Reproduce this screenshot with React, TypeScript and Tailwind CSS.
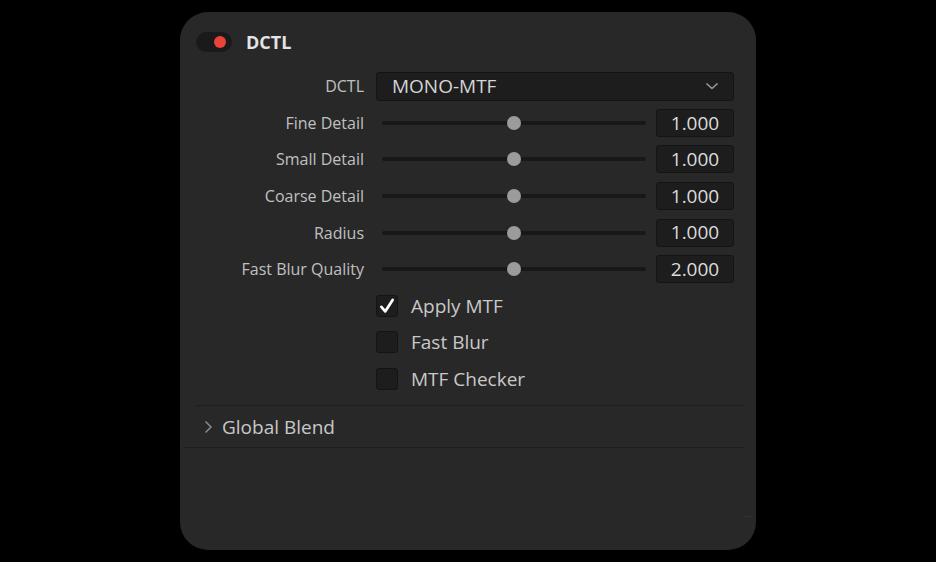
import { useState } from "react";

const sliders = [
  { label: "Fine Detail", value: "1.000" },
  { label: "Small Detail", value: "1.000" },
  { label: "Coarse Detail", value: "1.000" },
  { label: "Radius", value: "1.000" },
  { label: "Fast Blur Quality", value: "2.000" },
];

const checks = [
  { label: "Apply MTF", checked: true },
  { label: "Fast Blur", checked: false },
  { label: "MTF Checker", checked: false },
];

function Slider({ value }: { value: string }) {
  return (
    <div className="flex items-center h-full">
      <div className="relative ml-[6px] w-[264px] h-[4px] rounded-full bg-[#181818]">
        <div className="absolute left-[125px] top-[-5px] w-[14px] h-[14px] rounded-full bg-[#9b9b9b]" />
      </div>
      <div className="ml-[10px] w-[78px] h-[28px] flex items-center justify-center rounded-[3px] bg-[#1d1d1d] border border-[#141414] text-[19px] text-[#dcdcdc]">
        {value}
      </div>
    </div>
  );
}

export default function App() {
  const [checked, setChecked] = useState(checks.map((c) => c.checked));

  return (
    <div className="w-[936px] h-[562px] bg-black pt-[12px] font-['Open_Sans',sans-serif]">
      <div className="relative mx-auto w-[576px] h-[538px] rounded-[28px] bg-[#282828] pt-[20px]">
        {/* Header */}
        <div className="flex items-center h-[20px] pl-[16px]">
          <div className="w-[36px] h-[20px] rounded-full bg-[#1a1a1a] flex items-center justify-end pr-[6px]">
            <div className="w-[12px] h-[12px] rounded-full bg-[#e8443a]" />
          </div>
          <span className="ml-[14px] text-[18px] font-bold text-[#e4e4e4]">DCTL</span>
        </div>

        {/* Params */}
        <div className="mt-[16px] grid grid-cols-[184px_358px] gap-x-[12px] auto-rows-[36.6px] text-[#c0c0c0]">
          <div className="flex items-center justify-end text-[16px]">DCTL</div>
          <div className="flex items-center">
            <div className="w-full h-[29px] flex items-center justify-between pl-[15px] pr-[14px] rounded-[3px] bg-[#1d1d1d] border border-[#141414] text-[19px] text-[#d4d4d4]">
              <span>MONO-MTF</span>
              <svg width="14" height="8" viewBox="0 0 14 8" fill="none">
                <path d="M1.5 1.5 L7 6.5 L12.5 1.5" stroke="#9a9a9a" strokeWidth="1.6" />
              </svg>
            </div>
          </div>

          {sliders.map((s) => (
            <>
              <div key={s.label} className="flex items-center justify-end text-[16px]">
                {s.label}
              </div>
              <Slider key={s.label + "-s"} value={s.value} />
            </>
          ))}

          {checks.map((c, i) => (
            <>
              <div key={c.label + "-e"} />
              <label key={c.label} className="flex items-center cursor-pointer">
                <span
                  onClick={() => setChecked((prev) => prev.map((v, j) => (j === i ? !v : v)))}
                  className="w-[22px] h-[22px] rounded-[3px] bg-[#1d1d1d] border border-[#141414] flex items-center justify-center"
                >
                  {checked[i] && (
                    <svg width="18" height="18" viewBox="0 0 16 16" fill="none">
                      <path d="M3 8.8 L6.4 12.8 L13 2.6" stroke="#ffffff" strokeWidth="2.4" strokeLinecap="round" strokeLinejoin="round" />
                    </svg>
                  )}
                </span>
                <span className="ml-[13px] text-[19px] text-[#c8c8c8]">{c.label}</span>
              </label>
            </>
          ))}
        </div>

        {/* Global Blend */}
        <div className="mt-[8px] ml-[16px] mr-[12px] h-px bg-[#1f1f1f]" />
        <div className="flex items-center h-[41px] pl-[24px] text-[19px] text-[#c8c8c8]">
          <svg width="9" height="14" viewBox="0 0 9 14" fill="none">
            <path d="M1.5 1.5 L7 7 L1.5 12.5" stroke="#8a8a8a" strokeWidth="1.5" />
          </svg>
          <span className="ml-[9px]">Global Blend</span>
        </div>
        <div className="ml-[3px] mr-[12px] h-px bg-[#1f1f1f]" />

        {/* resize grip */}
        <div className="absolute right-[4px] top-[504px] w-[8px] h-px bg-[#333333]" />
      </div>
    </div>
  );
}
